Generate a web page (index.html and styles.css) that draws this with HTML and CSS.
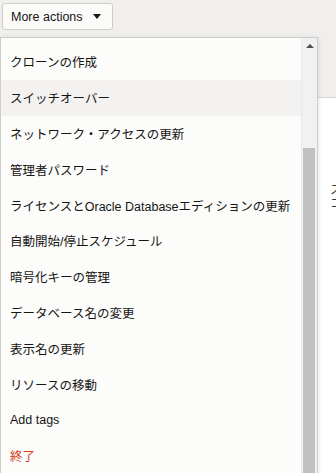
FILE: index.html
```html
<!DOCTYPE html>
<html lang="ja">
<head>
    <meta charset="UTF-8">
    <meta name="viewport" content="width=device-width, initial-scale=1.0">
    <title>More actions</title>
    <link rel="stylesheet" href="styles.css">
</head>
<body>
    <div class="page">
        <div class="toolbar">
            <button class="actions-btn">More actions <span class="caret"></span></button>
        </div>
        <div class="panel">
            <p>ステータス</p>
            <p>コンパートメント</p>
        </div>

        <div class="menu">
            <ul class="menu-list">
                <li>クローンの作成</li>
                <li class="active">スイッチオーバー</li>
                <li>ネットワーク・アクセスの更新</li>
                <li>管理者パスワード</li>
                <li>ライセンスとOracle Databaseエディションの更新</li>
                <li>自動開始/停止スケジュール</li>
                <li>暗号化キーの管理</li>
                <li>データベース名の変更</li>
                <li>表示名の更新</li>
                <li>リソースの移動</li>
                <li>Add tags</li>
                <li class="danger">終了</li>
            </ul>
            <div class="scrollbar">
                <div class="sb-btn"><span class="arrow-up"></span></div>
                <div class="sb-track"><div class="sb-thumb"></div></div>
                <div class="sb-btn"><span class="arrow-down"></span></div>
            </div>
        </div>
    </div>
</body>
</html>
```

FILE: styles.css
```css
body {
    margin: 0;
    font-family: "Liberation Sans", "Noto Sans CJK JP", sans-serif;
    background-color: #f1efed;
    color: #161513;
}

.page {
    position: relative;
    height: 473px;
    overflow: hidden;
}

.toolbar {
    height: 97px;
    padding: 3px 0 0 2px;
    box-sizing: border-box;
}

.actions-btn {
    display: flex;
    align-items: center;
    gap: 10px;
    height: 27px;
    padding: 0 11px 0 8px;
    font-family: inherit;
    font-size: 12.5px;
    color: #161513;
    background-color: #fbfbfa;
    border: 1px solid #cfcdca;
    border-radius: 3px;
}

.caret {
    width: 0;
    height: 0;
    border-left: 4px solid transparent;
    border-right: 4px solid transparent;
    border-top: 5px solid #161513;
}

.panel {
    background-color: #ffffff;
    border-top: 1px solid #d7d5d2;
    height: 400px;
    padding: 85px 0 0 330px;
    box-sizing: border-box;
    font-size: 12.5px;
    overflow: hidden;
}

.panel p {
    margin: 0;
    line-height: 14px;
    white-space: nowrap;
    color: #3a3632;
}

.menu {
    position: absolute;
    top: 37px;
    left: 0;
    width: 318px;
    height: 460px;
    display: flex;
    background-color: #fcfcfb;
    border: 1px solid #cfcdca;
    box-sizing: border-box;
    box-shadow: 0 2px 6px rgba(0, 0, 0, 0.12);
}

.menu-list {
    flex: 1;
    list-style: none;
    margin: 0;
    padding: 6px 0 0;
}

.menu-list li {
    height: 35.8px;
    display: flex;
    align-items: center;
    padding-left: 9px;
    font-size: 12.5px;
    white-space: nowrap;
}

.menu-list li.active {
    background-color: #f3f2f1;
}

.menu-list li.danger {
    color: #d63b25;
}

.scrollbar {
    width: 15px;
    display: flex;
    flex-direction: column;
    background-color: #f1f1f1;
    border-left: 1px solid #e9e8e6;
}

.sb-btn {
    height: 15px;
    display: flex;
    align-items: center;
    justify-content: center;
}

.arrow-up {
    width: 0;
    height: 0;
    border-left: 4px solid transparent;
    border-right: 4px solid transparent;
    border-bottom: 4px solid #505050;
}

.arrow-down {
    width: 0;
    height: 0;
    border-left: 4px solid transparent;
    border-right: 4px solid transparent;
    border-top: 4px solid #a3a3a3;
}

.sb-track {
    flex: 1;
    display: flex;
    flex-direction: column;
    justify-content: flex-end;
    padding: 0 2px 0 1px;
}

.sb-thumb {
    height: 333px;
    background-color: #c1c1c1;
}
```
